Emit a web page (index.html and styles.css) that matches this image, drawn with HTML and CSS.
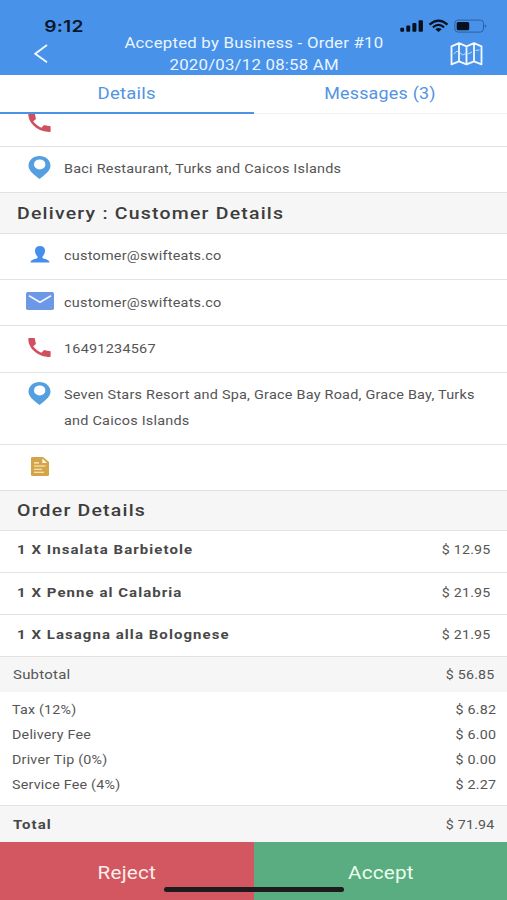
FILE: index.html
```html
<!DOCTYPE html>
<html lang="en">
<head>
<meta charset="utf-8">
<title>Order #10</title>
<link rel="stylesheet" href="styles.css">
</head>
<body>
<svg class="defs" aria-hidden="true">
  <symbol id="phone" viewBox="0 0 24 19" preserveAspectRatio="none"><path d="M1.200 0H6.300Q7.200 0 7.300 1C7.500 2.500 7.700 3.900 8.200 5.200Q8.400 5.900 7.800 6.500L5.400 8.200C7.600 11 10.500 13.200 14 14.700L16.300 12.400Q16.900 11.900 17.600 12.200C19.200 12.700 21 13 22.800 13Q23.600 13.100 23.600 14V18Q23.600 18.900 22.700 18.900C10.500 18.900 .3 10.500 .3 .9Q.3 0 1.200 0Z" fill="#d0505f"/></symbol>
  <symbol id="pin" viewBox="0 0 22 23"><path fill-rule="evenodd" d="M11 0C4.900 0 0 4.200 0 9.600C0 14.400 4.200 17.800 8.100 20.700L11 23L13.900 20.700C17.800 17.800 22 14.400 22 9.600C22 4.200 17.100 0 11 0ZM11.200 3.400A5.700 5 0 1 1 11.200 13.400A5.700 5 0 1 1 11.200 3.400Z" fill="#539fdf"/></symbol>
</svg>
<div class="screen">
  <header class="header">
    <div class="status">
      <span class="time"><span class="t c clock">9:12</span></span>
      <svg class="indicators" viewBox="0 0 88 16">
        <g fill="#06101f"><rect x=".3" y="8.800" width="3.800" height="3.900" rx=".9"/><rect x="6.300" y="6.500" width="3.900" height="6.200" rx=".9"/><rect x="12.400" y="4" width="4" height="8.700" rx=".9"/><rect x="18.600" y="1.300" width="4.300" height="11.400" rx=".9"/></g>
        <g fill="none" stroke="#06101f" stroke-width="2.100"><path d="M29.500 5.600Q38.500-2.400 47.500 5.600"/><path d="M32.900 8.400Q38.500 3.500 44.100 8.400"/></g>
        <path d="M35.300 10.300Q38.500 7.800 41.700 10.300L38.500 12.900Z" fill="#06101f"/>
        <rect x="54.800" y="1.100" width="28.700" height="12" rx="3.300" fill="none" stroke="#2c60a0" stroke-width="1"/>
        <rect x="56.700" y="2.900" width="12.500" height="8.300" rx="1.500" fill="#06101f"/><path d="M84.800 5.200Q87.600 7 84.800 9Z" fill="#2c60a0"/>
      </svg>
    </div>
    <div class="bar">
      <svg class="back" viewBox="0 0 14 20"><path d="M13 1L1.200 9.700L13 18.300" fill="none" stroke="#f5fbff" stroke-width="1.700"/></svg>
      <h1 class="title"><span class="t c">Accepted by Business - Order #10</span><span class="t c">2020/03/12 08:58 AM</span></h1>
      <svg class="map" viewBox="0 0 32 24"><g fill="none" stroke="#f3f9ff" stroke-width="1.800" stroke-linejoin="round"><path d="M1 4.300L8.500 1.200L16 4.300L23.500 1.200L31 4.300V22.300L23.500 19.300L16 22.300L8.500 19.300L1 22.300ZM8.500 1.200V19.300M16 4.300V22.300M23.500 1.200V19.300"/><path d="M3.500 12Q5.500 8.500 7.800 9.300M9.500 10.500Q11.500 14.500 15 11.500M17.500 12L21.500 10M25 8.500L29 8" stroke-width="1" opacity=".7"/></g></svg>
    </div>
  </header>
  <nav class="tabs">
    <div class="tab active"><span class="t c">Details</span></div>
    <div class="tab"><span class="t c messages">Messages (3)</span></div>
  </nav>
  <main>
    <div class="row cut"><svg class="ic phone"><use href="#phone"/></svg></div>
    <div class="row baci"><svg class="ic pin"><use href="#pin"/></svg><p><span class="t">Baci Restaurant, Turks and Caicos Islands</span></p></div>
    <h2 class="section s1"><span class="t">Delivery : Customer Details</span></h2>
    <div class="row r46"><svg class="ic person" viewBox="0 0 20 17"><path d="M10 0C6.800 0 5 1.700 5 4.600C5 7 5.900 9.200 7.500 10.400V12C5.700 13.300 .8 13 .5 16.500H19.500C19.200 13 14.300 13.300 12.500 12V10.400C14.100 9.200 15 7 15 4.600C15 1.700 13.200 0 10 0Z" fill="#438feb"/></svg><p><span class="t">customer@swifteats.co</span></p></div>
    <div class="row r46"><svg class="ic envelope" viewBox="0 0 28 18"><rect width="28" height="18" rx="1.800" fill="#6d98e7"/><path d="M3 3.700L14 10.300L25 3.700" fill="none" stroke="#f1f6ff" stroke-width="1.600"/></svg><p><span class="t">customer@swifteats.co</span></p></div>
    <div class="row r47"><svg class="ic phone"><use href="#phone"/></svg><p><span class="t">16491234567</span></p></div>
    <div class="row stay"><svg class="ic pin"><use href="#pin"/></svg><p><span class="t">Seven Stars Resort and Spa, Grace Bay Road, Grace Bay, Turks</span><span class="t">and Caicos Islands</span></p></div>
    <div class="row note"><svg class="ic doc" viewBox="0 0 18 19"><path d="M1 0H12L18 5V17.500Q18 19 16.500 19H1.500Q0 19 0 17.500V1Q0 0 1 0Z" fill="#d3a548"/><path d="M11.300 1.600V6H16Z" fill="#fff8e7"/><path d="M3 5.900H8M3 9H14.500M3 12.200H11M3 15.300H13" stroke="#fff1d2" stroke-width="1.100"/></svg></div>
    <h2 class="section s2"><span class="t">Order Details</span></h2>
    <div class="item"><span class="t name">1 X Insalata Barbietole</span><span class="t r">$ 12.95</span></div>
    <div class="item i2"><span class="t name">1 X Penne al Calabria</span><span class="t r">$ 21.95</span></div>
    <div class="item i3"><span class="t name">1 X Lasagna alla Bolognese</span><span class="t r">$ 21.95</span></div>
    <div class="sum sub"><span class="t">Subtotal</span><span class="t r">$ 56.85</span></div>
    <div class="fees">
      <div class="fee"><span class="t">Tax (12%)</span><span class="t r">$ 6.82</span></div>
      <div class="fee"><span class="t">Delivery Fee</span><span class="t r">$ 6.00</span></div>
      <div class="fee"><span class="t">Driver Tip (0%)</span><span class="t r">$ 0.00</span></div>
      <div class="fee"><span class="t">Service Fee (4%)</span><span class="t r">$ 2.27</span></div>
    </div>
    <div class="sum total"><span class="t name">Total</span><span class="t r">$ 71.94</span></div>
  </main>
  <footer class="actions">
    <div class="btn reject"><span class="t c">Reject</span></div>
    <div class="btn accept"><span class="t c">Accept</span></div>
    <i class="home"></i>
  </footer>
</div>
</body>
</html>
```
FILE: styles.css
```css
* { box-sizing: border-box; }
body { margin: 0; background: #fff; font-family: Roboto, "Liberation Sans", sans-serif; font-size: 12.7px; color: #555; }
h1, h2, p { margin: 0; font-weight: 400; }
.defs { position: absolute; width: 0; height: 0; }
.screen { width: 507px; height: 900px; display: flex; flex-direction: column; overflow: hidden; }

/* Type is set wide: every label is widened from its anchored edge. */
.t { --wide: 1.18; display: inline-block; white-space: nowrap; transform: scaleX(var(--wide)); transform-origin: left center; letter-spacing: .2px; }
.t.c { transform-origin: center; }
.t.r { --wide: 1.12; transform-origin: right center; }
.row .t { --wide: 1.138; }
.fee .t { --wide: 1.125; }
.title .t { --wide: 1.157; }
.t.clock { --wide: 1.24; }
.t.messages { --wide: 1.14; }

.header { height: 75px; flex: none; background: #4992ea; display: flex; flex-direction: column; }
.status { height: 33px; display: flex; justify-content: space-between; padding: 19px 19px 0 45px; }
.time { width: 38px; font: 600 15.500px/15px Inter, sans-serif; color: #06172c; display: flex; justify-content: center; }
.indicators { width: 88px; height: 16px; flex: none; }
.bar { flex: 1; display: flex; justify-content: space-between; padding: 0 24px 0 34px; }
.back { width: 14px; height: 20px; margin-top: 11px; }
.title { display: flex; flex-direction: column; align-items: center; font-size: 14.500px; line-height: 22px; color: #eaf5ff; margin-left: 10px; }
.map { width: 33px; height: 24px; margin-top: 9px; }

.tabs { height: 39px; flex: none; display: flex; border-bottom: 1px solid #f1f1f1; }
.tab { flex: 1; display: flex; justify-content: center; font-size: 15.700px; line-height: 38px; color: #5394e2; height: 39px; }
.tab.active { border-bottom: 2px solid #4a91e8; }

.row { display: flex; align-items: flex-start; border-bottom: 1px solid #e2e2e2; padding-left: 26px; line-height: 26px; }
.row p { margin-left: 11px; padding-top: 9px; display: flex; flex-direction: column; }
.ic { margin: 0 2px; flex: none; }
.phone { width: 23px; height: 19px; margin-top: 12px; margin-right: 2px; }
.cut { height: 33px; overflow: hidden; }
.cut .phone { margin-top: -1px; }
.pin { width: 23px; height: 23px; margin-top: 9px; }
.baci { height: 46px; }
.person { width: 20px; height: 17px; margin: 12px 3px 0 4px; }
.envelope { width: 28px; height: 18px; margin: 12px 0 0; }
.envelope + p { margin-left: 10px; padding-top: 10px; }
.r47 p { padding-top: 10px; }
.doc { width: 18px; height: 19px; margin: 12px 0 0 5px; }
.r46 { height: 46px; }
.r47 { height: 47px; }
.stay { height: 72px; }
.note { height: 46px; }

.section { background: #f6f6f6; border-bottom: 1px solid #e2e2e2; padding-left: 17px; font-size: 16.500px; font-weight: 500; color: #3d3d3d; }
.section .t { letter-spacing: 1.03px; }
.s1 { height: 41px; line-height: 41px; }
.s2 { height: 40px; line-height: 40px; }

.item { height: 42px; line-height: 38px; border-bottom: 1px solid #e2e2e2; display: flex; justify-content: space-between; padding: 0 16px 0 17px; }
.t.name { font-weight: 700; color: #484848; letter-spacing: .9px; }
.item.i2, .item.i3 { line-height: 39px; }
.sum { background: #f6f6f6; display: flex; justify-content: space-between; padding: 0 12px 0 13px; line-height: 35px; }
.sub { height: 35px; }
.fees { height: 114px; padding: 5px 11px 0 12px; border-bottom: 1px solid #e2e2e2; }
.fee { display: flex; justify-content: space-between; height: 25px; line-height: 25px; }
.total { height: 36px; line-height: 37px; }

.actions { height: 58px; flex: none; display: flex; position: relative; }
.btn { display: flex; justify-content: center; font-size: 17.500px; line-height: 62px; }
.reject { width: 254px; background: #d35760; color: #ffeeec; }
.accept { flex: 1; background: #59ad80; color: #ebffef; }
.home { position: absolute; left: 164px; bottom: 8px; width: 180px; height: 5px; border-radius: 3px; background: #1d1b1d; }
```
